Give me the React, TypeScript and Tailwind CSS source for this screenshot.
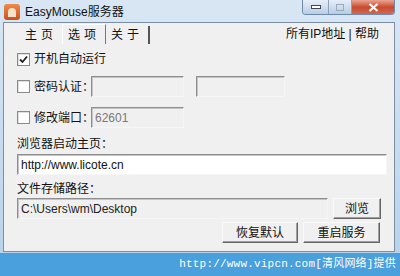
const cjk = { fontFamily: '"Liberation Sans", "Noto Sans CJK SC", sans-serif' };

const CheckBox = ({ checked }: { checked?: boolean }) => (
  <div className="w-[13px] h-[13px] shrink-0 border border-[#8a8a8a] bg-white flex items-center justify-center shadow-[inset_1px_1px_0_#e0e0e0]">
    {checked && (
      <svg width="9" height="9" viewBox="0 0 9 9">
        <path d="M1 4.5 L3.5 7 L8 1.5" stroke="#222" strokeWidth="1.8" fill="none" />
      </svg>
    )}
  </div>
);

const Field = ({ w, value, tone }: { w: string; value?: string; tone: "white" | "gray" | "dark" }) => (
  <div
    className={`${w} h-[21px] shrink-0 border border-t-[#8e8e8e] border-l-[#8e8e8e] border-r-[#f6f6f6] border-b-[#f6f6f6] shadow-[inset_1px_1px_0_#c4c4c4] flex items-center px-[3px] text-[12px] ${
      tone === "white" ? "bg-white text-[#111]" : tone === "dark" ? "bg-[#f0f0f0] text-[#222]" : "bg-[#f0f0f0] text-[#7a7a7a]"
    }`}
  >
    {value}
  </div>
);

const Btn = ({ label, w }: { label: string; w: string }) => (
  <div
    className={`${w} h-[21px] bg-[#f0f0f0] border border-t-[#fafafa] border-l-[#fafafa] border-r-[#646464] border-b-[#646464] shadow-[inset_-1px_-1px_0_#a0a0a0] flex items-center justify-center text-[12px] text-[#111]`}
  >
    {label}
  </div>
);

export default function App() {
  return (
    <div className="w-[400px] h-[276px] bg-[#4a9fdd] flex flex-col overflow-hidden" style={cjk}>
      <div className="h-[253px] bg-gradient-to-b from-[#d9e7f4] to-[#b9d3ec] flex flex-col pl-[3px] pr-[5px]">
        {/* title bar */}
        <div className="h-[22px] flex items-start justify-between">
          <div className="flex items-center gap-[5px] pt-[3px] pl-[1px]">
            <div className="w-[16px] h-[16px] rounded-[3px] bg-gradient-to-b from-[#f08a4a] to-[#c8501e] flex items-center justify-center">
              <div className="w-[8px] h-[9px] rounded-t-[4px] bg-[#f6e2c8]" />
            </div>
            <span className="text-[12px] text-[#111]">EasyMouse服务器</span>
          </div>
          <div className="flex h-[15px] rounded-b-[4px] overflow-hidden border border-t-0 border-[#6f8aa8]">
            <div className="w-[26px] bg-gradient-to-b from-[#e6eef8] to-[#b9cde4] border-r border-[#8aa0bb] flex items-center justify-center">
              <div className="w-[10px] h-[4px] border border-[#445] bg-white" />
            </div>
            <div className="w-[23px] bg-gradient-to-b from-[#e6eef8] to-[#b9cde4] border-r border-[#8aa0bb] flex items-center justify-center">
              <div className="w-[8px] h-[7px] border border-[#9aaabb]" />
            </div>
            <div className="w-[42px] bg-gradient-to-b from-[#e9a493] via-[#c94a2e] to-[#d0684f] flex items-center justify-center">
              <svg width="11" height="9" viewBox="0 0 11 9">
                <path d="M1.5 1 L9.5 8 M9.5 1 L1.5 8" stroke="#fff" strokeWidth="2.2" />
              </svg>
            </div>
          </div>
        </div>
        {/* client */}
        <div className="flex-1 mb-[1px] bg-[#f0f0f0] border border-[#7d8fa3] flex flex-col px-[13px] text-[12px] text-[#111]">
          <div className="flex items-end justify-between h-[21px]">
            <div className="flex items-end h-[20px]">
              <div className="px-[5px] h-[18px] flex items-center tracking-[4px] ml-[3px]">主页</div>
              <div className="px-[5px] h-[20px] flex items-center tracking-[4px] border border-b-0 border-t-[#fff] border-l-[#fff] border-r-[#777] bg-[#f0f0f0]">选项</div>
              <div className="px-[5px] h-[18px] flex items-center tracking-[4px] border-r-2 border-[#555]">关于</div>
            </div>
            <div className="h-[20px] flex items-center pr-[2px]">所有IP地址 | 帮助</div>
          </div>
          <div className="flex items-center gap-[4px] mt-[8px] h-[14px]">
            <CheckBox checked />
            <span>开机自动运行</span>
          </div>
          <div className="flex items-center mt-[10px]">
            <CheckBox />
            <span className="ml-[4px] w-[57px] whitespace-nowrap">密码认证：</span>
            <Field w="w-[93px]" tone="gray" />
            <div className="w-[12px]" />
            <Field w="w-[89px]" tone="gray" />
          </div>
          <div className="flex items-center mt-[10px]">
            <CheckBox />
            <span className="ml-[4px] w-[57px] whitespace-nowrap">修改端口：</span>
            <Field w="w-[93px]" value="62601" tone="gray" />
          </div>
          <div className="mt-[8px] h-[15px] flex items-center">浏览器启动主页：</div>
          <div className="mt-[3px]">
            <Field w="w-[370px]" tone="white" value="http://www.licote.cn" />
          </div>
          <div className="mt-[6px] h-[15px] flex items-center">文件存储路径：</div>
          <div className="mt-[2px] flex items-center gap-[5px]">
            <Field w="w-[311px]" value="C:\Users\wm\Desktop" tone="dark" />
            <Btn label="浏览" w="w-[55px]" />
          </div>
          <div className="mt-[3px] flex justify-end gap-[5px] pr-[1px]">
            <Btn label="恢复默认" w="w-[76px]" />
            <Btn label="重启服务" w="w-[77px]" />
          </div>
        </div>
      </div>
      <div className="flex-1 flex items-center justify-end pr-[4px]">
        <span
          className="text-white text-[11px] tracking-[0.2px]"
          style={{ fontFamily: '"Liberation Mono", "Noto Sans CJK SC", monospace' }}
        >
          http://www.vipcn.com[清风网络]提供
        </span>
      </div>
    </div>
  );
}
